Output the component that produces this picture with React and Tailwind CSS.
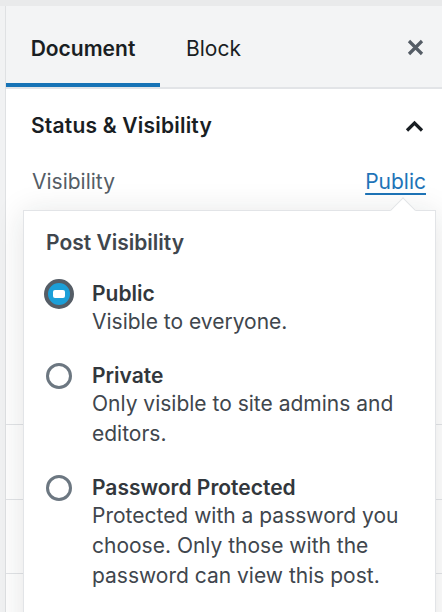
import React from "react";

function Radio({ checked }) {
  if (checked) {
    return (
      <span className="w-[30px] h-[30px] rounded-full border-[4px] border-[#555d66] bg-[#1c9fd8] flex items-center justify-center shrink-0">
        <span className="w-[12px] h-[8px] rounded-[2px] bg-white" />
      </span>
    );
  }
  return <span className="w-[26px] h-[26px] rounded-full border-[3px] border-[#6c7781] bg-white shrink-0" />;
}

function Option({ checked, label, children }) {
  return (
    <div className="flex">
      <div className="w-[26px] h-[26px] flex items-center justify-center shrink-0">
        <Radio checked={checked} />
      </div>
      <div className="ml-[20px]">
        <div className="text-[21px] leading-[26px] font-semibold text-[#32373c]">{label}</div>
        <div className="text-[21px] leading-[30px] text-[#40464d]">{children}</div>
      </div>
    </div>
  );
}

export default function App() {
  return (
    <div
      className="w-[442px] h-[612px] relative overflow-hidden bg-white flex flex-col"
      style={{ fontFamily: "Inter, 'Noto Sans', sans-serif" }}
    >
      <div className="h-[6px] bg-[#e9eaeb] shrink-0" />
      <div className="flex flex-1 min-h-0">
        <div className="w-[6px] bg-[#f1f2f3] border-r border-[#dfe1e3] shrink-0" />
        <div className="flex-1 flex flex-col min-w-0">
          {/* Tabs header */}
          <div className="h-[83px] bg-[#f3f4f5] flex items-stretch border-b-2 border-[#e2e4e7] shrink-0">
            <div className="w-[154px] flex items-center justify-center text-[21px] font-semibold text-[#191e23] shadow-[inset_0_-4px_0_#1673b6] pt-[4px]">
              Document
            </div>
            <div className="px-[26px] flex items-center text-[21px] text-[#191e23] pt-[4px]">Block</div>
            <div className="flex-1" />
            <div className="pr-[18px] flex items-center pt-[2px]">
              <svg width="17" height="17" viewBox="0 0 17 17">
                <path d="M2 2 L15 15 M15 2 L2 15" stroke="#555d66" strokeWidth="3.2" strokeLinecap="butt" />
              </svg>
            </div>
          </div>

          {/* Panel title */}
          <div className="h-[72px] flex items-center justify-between pl-[25px] pr-[18px] pt-[2px] shrink-0">
            <span className="text-[21px] font-semibold text-[#191e23] tracking-[0.2px]">Status &amp; Visibility</span>
            <svg width="19" height="12" viewBox="0 0 19 12">
              <path d="M2 10.5 L9.5 3 L17 10.5" fill="none" stroke="#191e23" strokeWidth="3.2" />
            </svg>
          </div>

          {/* Visibility row */}
          <div className="h-[42px] flex items-center justify-between pl-[26px] pr-[16px] shrink-0">
            <span className="text-[21px] text-[#555d66]">Visibility</span>
            <span className="text-[21px] text-[#1e74b8] underline underline-offset-[4px] decoration-[2px]">Public</span>
          </div>

          {/* Rows behind popover */}
          <div className="h-[221px] shrink-0" />
          <div className="h-[75px] border-t border-[#e2e4e7] shrink-0" />
          <div className="h-[74px] border-t border-[#e2e4e7] shrink-0" />
          <div className="h-[75px] border-t border-[#e2e4e7] shrink-0" />
        </div>
      </div>

      {/* Popover */}
      <div className="absolute left-[23px] top-[210px] right-[6px] h-[440px] border border-[#e2e4e7] bg-white shadow-[0_3px_30px_rgba(25,30,35,0.12)]">
        <div className="absolute left-[370px] -top-[10px] w-[18px] h-[18px] rotate-45 bg-white border-l border-t border-[#e2e4e7]" />
        <div className="relative pl-[22px] pt-[17px]">
          <div className="text-[21px] leading-[29px] font-semibold text-[#40464d]">Post Visibility</div>
          <div className="mt-[24px] flex flex-col gap-[26px]">
            <Option checked label="Public">Visible to everyone.</Option>
            <Option label="Private">
              Only visible to site admins and
              <br />
              editors.
            </Option>
            <Option label="Password Protected">
              Protected with a password you
              <br />
              choose. Only those with the
              <br />
              password can view this post.
            </Option>
          </div>
        </div>
      </div>
    </div>
  );
}
